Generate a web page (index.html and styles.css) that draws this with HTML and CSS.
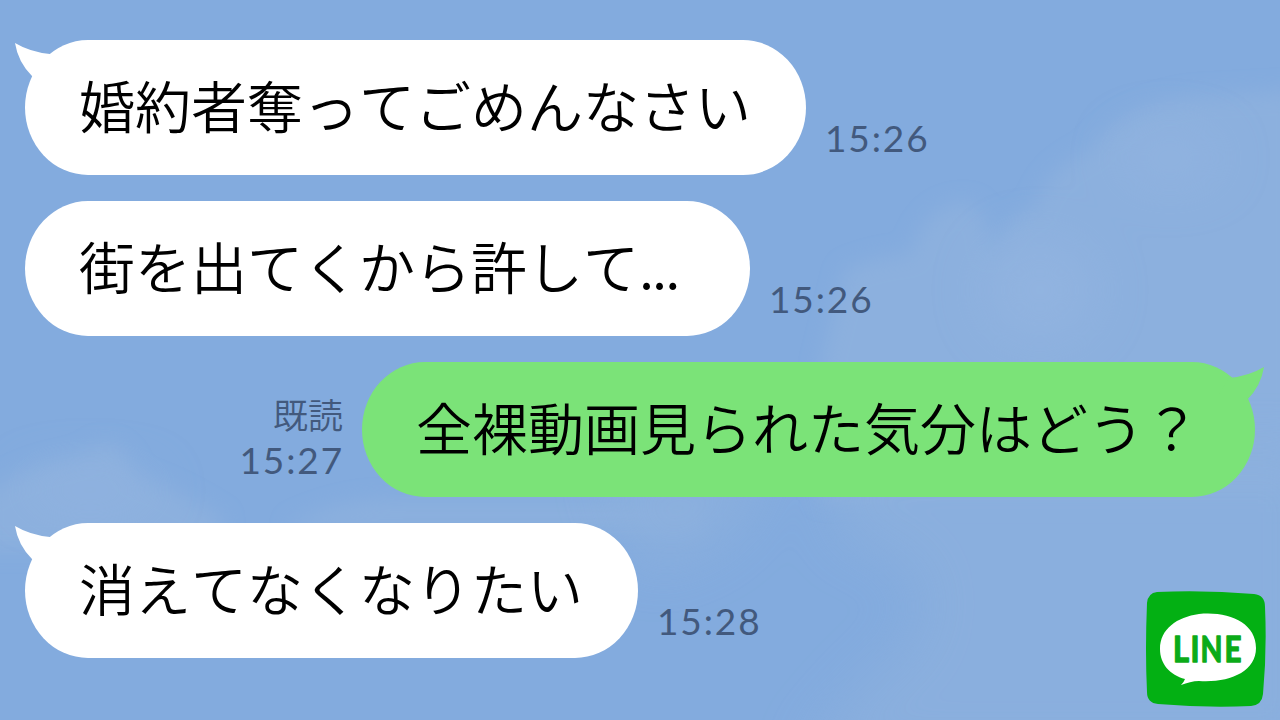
FILE: index.html
```html
<!DOCTYPE html>
<html lang="ja">
<head>
    <meta charset="UTF-8">
    <meta name="viewport" content="width=device-width, initial-scale=1.0">
    <title>LINE トーク</title>
    <link rel="stylesheet" href="styles.css">
</head>
<body>
    <!-- 空と雲 -->
    <svg class="sky" viewBox="0 0 1280 720" aria-hidden="true">
        <defs>
            <filter id="soft" x="-20%" y="-20%" width="140%" height="140%">
                <feGaussianBlur stdDeviation="10"/>
            </filter>
            <filter id="haze" x="-50%" y="-50%" width="200%" height="200%">
                <feGaussianBlur stdDeviation="26"/>
            </filter>
        </defs>
        <g fill="#8cb0de" filter="url(#soft)">
            <path d="M820 370 L845 270 Q880 255 910 255 Q925 205 965 202 Q988 205 990 255 Q1010 215 1035 208 Q1045 170 1090 150 Q1120 108 1190 96 L1300 90 V500 H820 Z"/>
            <path d="M-20 495 Q30 465 65 460 Q90 455 102 443 Q125 445 135 475 Q180 490 225 520 L210 550 H-20 Z"/>
            <path d="M290 525 Q340 500 390 500 H700 V530 H290 Z"/>
        </g>
        <g fill="#8cb0de" opacity="0.8" filter="url(#haze)">
            <path d="M600 460 H770 Q750 560 640 570 Z"/>
            <path d="M830 450 H1320 V760 H800 Q850 690 900 650 Q960 570 840 540 Z"/>
        </g>
        <g fill="#97b7e2" opacity="0.5" filter="url(#haze)">
            <ellipse cx="1170" cy="158" rx="50" ry="25"/>
            <ellipse cx="1040" cy="290" rx="55" ry="50"/>
            <ellipse cx="90" cy="490" rx="70" ry="16"/>
        </g>
    </svg>

    <main class="talk">
        <div class="message">
            <div class="bubble">
                <svg class="tail" viewBox="0 0 45 50"><path d="M0 3 Q15 12 35 14 L45 30 L25 46 L17 36 Q3 22 0 3 Z"/></svg>
                婚約者奪ってごめんなさい
            </div>
            <div class="meta"><time>15:26</time></div>
        </div>

        <div class="message">
            <div class="bubble bubble-dots"><span>街を出てくから許して<span class="dots">...</span></span></div>
            <div class="meta"><time>15:26</time></div>
        </div>

        <div class="message mine">
            <div class="bubble">
                <svg class="tail" viewBox="0 0 45 50"><path d="M0 3 Q15 12 35 14 L45 30 L25 46 L17 36 Q3 22 0 3 Z"/></svg>
                全裸動画見られた気分はどう？
            </div>
            <div class="meta"><span class="read">既読</span><time>15:27</time></div>
        </div>

        <div class="message">
            <div class="bubble">
                <svg class="tail" viewBox="0 0 45 50"><path d="M0 3 Q15 12 35 14 L45 30 L25 46 L17 36 Q3 22 0 3 Z"/></svg>
                消えてなくなりたい
            </div>
            <div class="meta"><time>15:28</time></div>
        </div>
    </main>

    <svg class="logo" viewBox="0 0 120 117" aria-label="LINE">
        <path fill="#03b013" d="M11 1 Q60 -1 108 3 Q119 4 119 16 Q121 60 117 103 Q116 114 105 115 Q60 117 12 113 Q1 112 1 101 Q-1 60 1 12 Q2 2 11 1 Z"/>
        <path fill="#fff" d="M53 23 C83 20 110 32 110 57 C110 81 83 92 53 90 C47 90 41 92 35 94 Q38 91 39 88 C24 84 14 73 14 58 C14 38 31 26 53 23 Z"/>
        <g class="logo-text">
            <text x="27" y="71" textLength="16" lengthAdjust="spacingAndGlyphs">L</text>
            <text x="44.5" y="71" textLength="9" lengthAdjust="spacingAndGlyphs">I</text>
            <text x="54.5" y="71" textLength="22" lengthAdjust="spacingAndGlyphs">N</text>
            <text x="78.5" y="71" textLength="17" lengthAdjust="spacingAndGlyphs">E</text>
        </g>
    </svg>
</body>
</html>
```
FILE: styles.css
```css
* {
    box-sizing: border-box;
}
body {
    margin: 0;
    width: 1280px;
    height: 720px;
    overflow: hidden;
    position: relative;
    background-color: #83abde;
    font-family: "Noto Sans CJK JP", sans-serif;
}
.sky {
    position: absolute;
    top: 0;
    left: 0;
    width: 1280px;
    height: 720px;
    z-index: -1;
}
.talk {
    display: flex;
    flex-direction: column;
    gap: 26px;
    padding: 40px 25px 0;
}
.message {
    display: flex;
    align-items: flex-end;
    gap: 19px;
}
.mine {
    flex-direction: row-reverse;
}
.bubble {
    position: relative;
    height: 135px;
    padding: 0 55px 0 54px;
    border-radius: 63px / 67.5px;
    background-color: #fff;
    color: #000;
    font-size: 56px;
    font-weight: 350;
    font-kerning: none;
    line-height: 127px;
    white-space: nowrap;
}
.bubble-dots {
    width: 725px;
}
.dots {
    letter-spacing: -2px;
}
.mine .bubble {
    background-color: #7be378;
}
/* 吹き出しのしっぽ */
.tail {
    position: absolute;
    top: 0;
    left: -10px;
    width: 45px;
    height: 50px;
    fill: #fff;
}
.mine .tail {
    left: auto;
    right: -9px;
    fill: #7be378;
    transform: scaleX(-1) translateY(2px);
}
.meta {
    display: flex;
    flex-direction: column;
    padding-bottom: 14px;
    color: #42597d;
    line-height: 46px;
}
.mine .meta {
    align-items: flex-end;
}
.meta time {
    font-family: Lato, sans-serif;
    font-size: 37px;
    letter-spacing: 1.9px;
}
.mine time {
    margin-right: -1px;
}
.read {
    font-size: 35px;
    font-weight: 350;
}
.logo {
    position: absolute;
    left: 1146px;
    top: 591px;
    width: 120px;
    height: 117px;
}
.logo-text {
    font-family: Lato, sans-serif;
    font-size: 36px;
    font-weight: 700;
    fill: #0bab18;
    stroke: #0bab18;
    stroke-width: 1.4px;
    stroke-linejoin: round;
}
```
